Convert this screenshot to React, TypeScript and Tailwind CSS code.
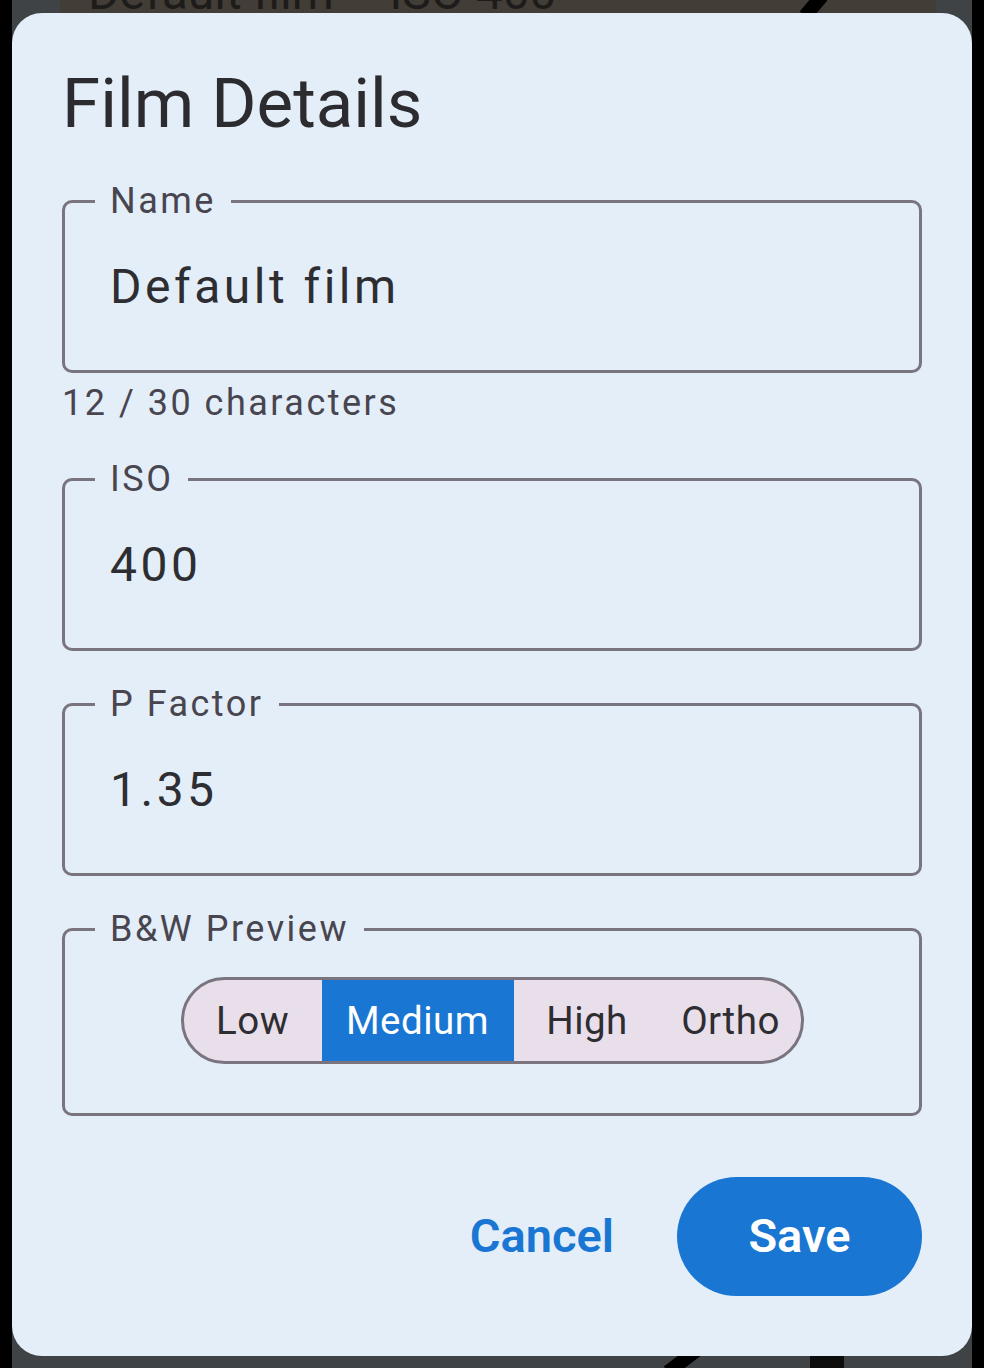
import React from "react";

function Field({ label, value }: { label: string; value: string }) {
  return (
    <fieldset className="h-[192px] rounded-[10px] border-[3px] border-[#79747e] px-[30px]">
      <legend className="px-[15px] text-[36px] leading-[40px] tracking-[2.5px] text-[#49454f]">{label}</legend>
      <div className="mt-[38px] pl-[15px] text-[48px] leading-[56px] tracking-[3.5px] text-[#2e2d31]">{value}</div>
    </fieldset>
  );
}

export default function App() {
  const segs = [
    { t: "Low", w: "w-[138px]", on: false },
    { t: "Medium", w: "w-[192px]", on: true },
    { t: "High", w: "w-[147px]", on: false },
    { t: "Ortho", w: "w-[140px]", on: false },
  ];
  return (
    <div className="relative flex h-[1368px] w-[984px] overflow-hidden bg-black font-['Roboto',sans-serif]">
      <div className="w-[12px] shrink-0 bg-black" />
      <div className="relative flex-1 bg-[#404346]">
        <div className="ml-[48px] mr-[36px] h-[60px] bg-[#433d37] pl-[28px] text-[48px] leading-[56px] text-[#1e1c1a] -mt-[35px]">
          Default film – ISO 400
        </div>
        <svg className="absolute left-0 top-0" width="960" height="1368" viewBox="0 0 960 1368">
          <line x1="793" y1="16" x2="810" y2="-4" stroke="#000" strokeWidth="14" />
          <line x1="656" y1="1372" x2="685" y2="1350" stroke="#000" strokeWidth="14" />
          <rect x="798" y="1350" width="34" height="20" fill="#0d0d0d" />
        </svg>
      </div>
      <div className="w-[12px] shrink-0 bg-black" />

      <div className="absolute left-[12px] top-[13px] flex w-[960px] flex-col rounded-[30px] bg-[#e3eef9] px-[50px] pb-[60px] pt-[51px]">
        <h1 className="text-[69px] leading-[80px] text-[#2c2b2f]">Film Details</h1>
        <div className="mt-[37px]">
          <Field label="Name" value="Default film" />
          <div className="mt-[8px] text-[36px] leading-[44px] tracking-[2.5px] text-[#49454f]">12 / 30 characters</div>
        </div>
        <div className="mt-[34px]">
          <Field label="ISO" value="400" />
        </div>
        <div className="mt-[33px]">
          <Field label="P Factor" value="1.35" />
        </div>
        <fieldset className="mt-[33px] h-[207px] rounded-[10px] border-[3px] border-[#79747e] px-[30px]">
          <legend className="px-[15px] text-[36px] leading-[40px] tracking-[2.5px] text-[#49454f]">B&amp;W Preview</legend>
          <div className="mt-[28px] flex justify-center">
            <div className="flex h-[87px] overflow-hidden rounded-full border-[3px] border-[#79747e] bg-[#e8dfeb]">
              {segs.map((s) => (
                <div
                  key={s.t}
                  className={`${s.w} flex items-center justify-center text-[38.5px] tracking-[0.5px] ${
                    s.on ? "bg-[#1976d2] text-white" : "text-[#2e2d31]"
                  }`}
                >
                  {s.t}
                </div>
              ))}
            </div>
          </div>
        </fieldset>
        <div className="mt-[61px] flex items-center justify-end gap-[27px]">
          <button className="h-[119px] px-[36px] text-[47px] font-semibold text-[#1976d2]">Cancel</button>
          <button className="h-[119px] w-[245px] rounded-full bg-[#1976d2] text-[47px] font-semibold text-white">Save</button>
        </div>
      </div>
    </div>
  );
}
